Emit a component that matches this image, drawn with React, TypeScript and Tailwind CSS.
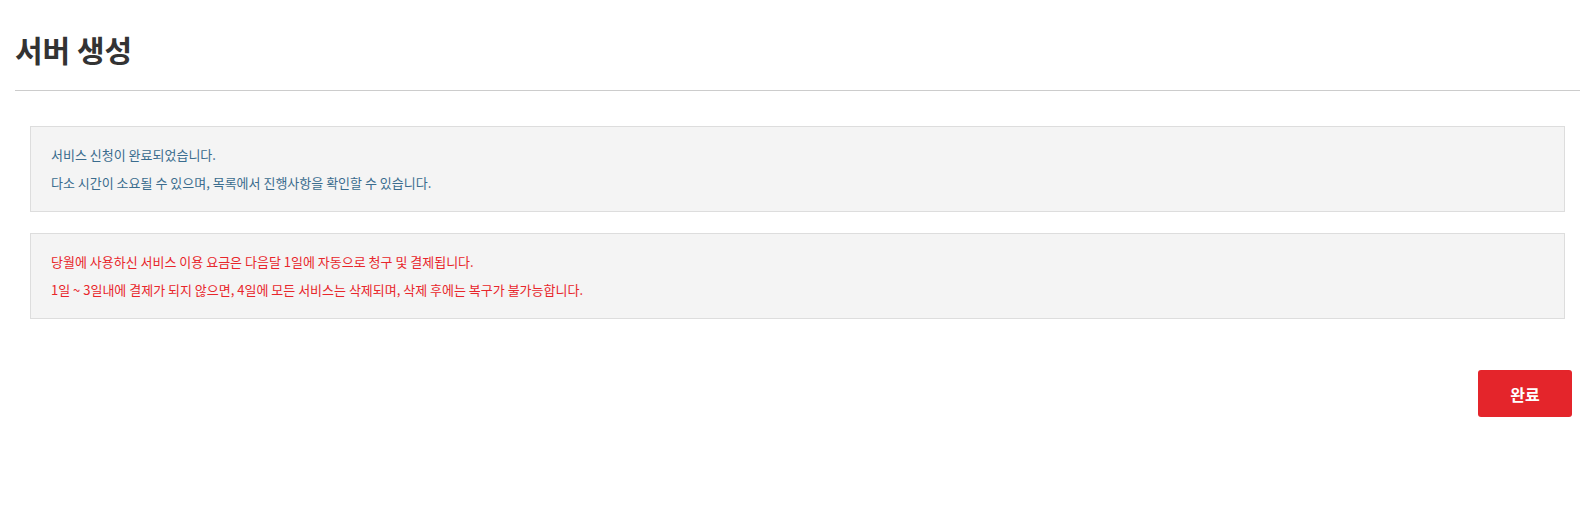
export default function App() {
  return (
    <div className="min-h-[518px] bg-white pl-[15px] pr-[7px] font-['Noto_Sans_CJK_KR','Noto_Sans',sans-serif]">
      <div className="h-[91px] border-b border-[#cccccc] pt-[29px]">
        <h1 className="m-0 text-[30px] font-bold leading-[40px] text-[#333333]">서버 생성</h1>
      </div>

      <div className="px-[15px] pt-[35px]">
        <div className="border border-[#dddddd] bg-[#f4f4f4] px-[20px] py-[14px] text-[13px] leading-[28px] text-[#3a6c8e]">
          <p>서비스 신청이 완료되었습니다.</p>
          <p>다소 시간이 소요될 수 있으며, 목록에서 진행사항을 확인할 수 있습니다.</p>
        </div>

        <div className="mt-[21px] border border-[#dddddd] bg-[#f4f4f4] px-[20px] py-[14px] text-[13px] leading-[28px] text-[#e8262b]">
          <p>당월에 사용하신 서비스 이용 요금은 다음달 1일에 자동으로 청구 및 결제됩니다.</p>
          <p>1일 ~ 3일내에 결제가 되지 않으면, 4일에 모든 서비스는 삭제되며, 삭제 후에는 복구가 불가능합니다.</p>
        </div>
      </div>

      <div className="mt-[51px] flex justify-end pr-[8px]">
        <button className="h-[47px] w-[94px] rounded-[3px] bg-[#e4252b] text-[16px] font-bold text-white">
          완료
        </button>
      </div>
    </div>
  );
}
